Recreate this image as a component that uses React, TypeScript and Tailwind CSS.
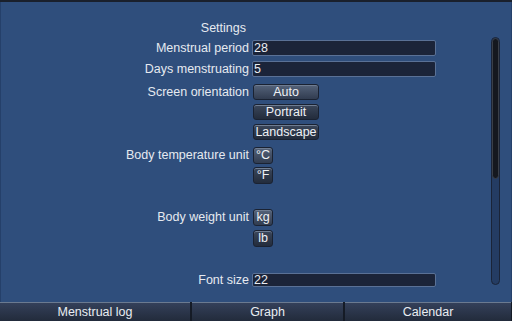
const font = { fontFamily: '"Liberation Sans", Arial, sans-serif' };

function Field({ value, h = "h-[16px]" }: { value: string; h?: string }) {
  return (
    <div
      className={`${h} w-[184px] rounded-[2px] border border-[#5a7196] bg-[#1b2439] pl-[1px] flex items-center text-[12.5px] leading-none text-[#e9edf2]`}
    >
      {value}
    </div>
  );
}

function Btn({
  label,
  w,
  h = "h-[16px]",
  dark = false,
}: {
  label: string;
  w: string;
  h?: string;
  dark?: boolean;
}) {
  return (
    <div
      className={`${w} ${h} rounded-[3px] border border-[#1a2232] flex items-center justify-center text-[12.5px] leading-none text-[#eef1f5] shadow-[inset_0_1px_0_#6f7d92] ${
        dark
          ? "bg-gradient-to-b from-[#3b475b] to-[#232c3c]"
          : "bg-gradient-to-b from-[#55637a] to-[#313c50]"
      }`}
    >
      {label}
    </div>
  );
}

function Row({
  label,
  top,
  lh = "h-[16px]",
  children,
}: {
  label: string;
  top: string;
  lh?: string;
  children: React.ReactNode;
}) {
  return (
    <div className={`flex items-start ${top}`}>
      <div
        className={`w-[248px] shrink-0 ${lh} flex items-center justify-end text-[12.5px] leading-none text-[#e6eaf0]`}
      >
        {label}
      </div>
      <div className="ml-[3px] flex flex-col">{children}</div>
    </div>
  );
}

export default function App() {
  return (
    <div
      className="w-[512px] h-[321px] flex flex-col bg-[#1b2230] overflow-hidden"
      style={font}
    >
      <div className="h-[2px] bg-[#1a202c]" />
      <div className="h-[300px] flex bg-[#2f4e7c] border-x border-[#25406a]">
        <div className="flex-1 flex flex-col">
          <div className="mt-[18px] w-[245px] h-[16px] flex items-center justify-end text-[12.5px] text-[#e6eaf0]">
            Settings
          </div>
          <Row label="Menstrual period" top="mt-[4px]">
            <Field value="28" />
          </Row>
          <Row label="Days menstruating" top="mt-[5px]">
            <Field value="5" />
          </Row>
          <Row label="Screen orientation" top="mt-[7px]">
            <div className="ml-[1px] flex flex-col gap-[4px]">
              <Btn label="Auto" w="w-[66px]" />
              <Btn label="Portrait" w="w-[66px]" dark />
              <Btn label="Landscape" w="w-[66px]" dark />
            </div>
          </Row>
          <Row label="Body temperature unit" top="mt-[7px]" lh="h-[17px]">
            <div className="ml-[1px] flex flex-col gap-[3px]">
              <Btn label="°C" w="w-[20px]" h="h-[17px]" />
              <Btn label="°F" w="w-[20px]" h="h-[17px]" dark />
            </div>
          </Row>
          <Row label="Body weight unit" top="mt-[25px]" lh="h-[17px]">
            <div className="ml-[1px] flex flex-col gap-[4px]">
              <Btn label="kg" w="w-[20px]" h="h-[17px]" />
              <Btn label="lb" w="w-[20px]" h="h-[17px]" dark />
            </div>
          </Row>
          <Row label="Font size" top="mt-[26px]" lh="h-[14px]">
            <Field value="22" h="h-[14px]" />
          </Row>
        </div>
        <div className="w-[9px] mt-[35px] mr-[11px] h-[248px] rounded-full border border-[#1a2438] bg-[#243c63] flex flex-col overflow-hidden">
          <div className="h-[141px] rounded-full bg-[#15181f] border border-[#3a3f48]" />
        </div>
      </div>
      <div className="h-[19px] flex gap-[2px] bg-[#151b26] pr-[1px]">
        {[
          ["Menstrual log", "w-[190px]"],
          ["Graph", "w-[151px]"],
          ["Calendar", "flex-1"],
        ].map(([t, w]) => (
          <div
            key={t}
            className={`${w} flex items-center justify-center border-t border-[#6b7a90] bg-gradient-to-b from-[#34405a] to-[#222b3b] text-[12.5px] leading-none text-[#e9edf2]`}
          >
            {t}
          </div>
        ))}
      </div>
    </div>
  );
}
